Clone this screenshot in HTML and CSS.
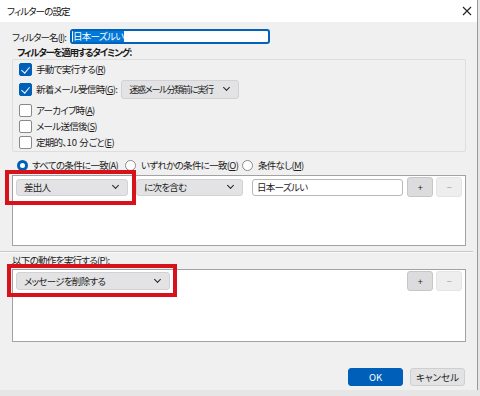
FILE: index.html
```html
<!DOCTYPE html>
<html lang="ja">
<head>
    <meta charset="UTF-8">
    <title>フィルターの設定</title>
    <link rel="stylesheet" href="styles.css">
</head>
<body>
    <div class="window">
        <!-- Title bar -->
        <div class="titlebar">
            <span class="title">フィルターの設定</span>
            <svg class="close" width="10" height="10" viewBox="0 0 10 10">
                <path d="M1 1L9 9M9 1L1 9" stroke="#222" stroke-width="1.1" fill="none"/>
            </svg>
        </div>

        <div class="dialog">
            <div class="section">
                <!-- Filter name -->
                <div class="name-row">
                    <span class="label">フィルター名(<u>I</u>):</span>
                    <div class="name-input"><span class="selected">日本ーズルい</span></div>
                </div>

                <!-- Timing -->
                <div class="group-title">フィルターを適用するタイミング:</div>
                <div class="group">
                    <div class="check-row">
                        <span class="check on"></span>
                        <span>手動で実行する(<u>R</u>)</span>
                    </div>
                    <div class="check-row tall">
                        <span class="check on"></span>
                        <span>新着メール受信時(<u>G</u>):</span>
                        <div class="select timing">迷惑メール分類前に実行<span class="chev"></span></div>
                    </div>
                    <div class="check-row">
                        <span class="check"></span>
                        <span>アーカイブ時(<u>A</u>)</span>
                    </div>
                    <div class="check-row">
                        <span class="check"></span>
                        <span>メール送信後(<u>S</u>)</span>
                    </div>
                    <div class="check-row">
                        <span class="check"></span>
                        <span>定期的、<span class="num">10 分</span>ごと(<u>E</u>)</span>
                    </div>
                </div>

                <!-- Match mode -->
                <div class="radio-row">
                    <div class="radio-item first">
                        <span class="radio on"></span>
                        <span>すべての条件に一致(<u>A</u>)</span>
                    </div>
                    <div class="radio-item second">
                        <span class="radio"></span>
                        <span>いずれかの条件に一致(<u>O</u>)</span>
                    </div>
                    <div class="radio-item">
                        <span class="radio"></span>
                        <span>条件なし(<u>M</u>)</span>
                    </div>
                </div>

                <!-- Conditions -->
                <div class="list conditions">
                    <div class="rule-row">
                        <div class="select marked field">差出人<span class="chev"></span></div>
                        <div class="select op">に次を含む<span class="chev"></span></div>
                        <div class="text-field">日本ーズルい</div>
                        <div class="pm">+</div>
                        <div class="pm off">−</div>
                    </div>
                </div>
            </div>

            <div class="sep"></div>

            <div class="section">
                <div class="action-title">以下の動作を実行する(<u>P</u>):</div>
                <div class="list actions">
                    <div class="rule-row">
                        <div class="select marked action">メッセージを削除する<span class="chev"></span></div>
                        <div class="fill"></div>
                        <div class="pm">+</div>
                        <div class="pm off">−</div>
                    </div>
                </div>

                <!-- Buttons -->
                <div class="footer">
                    <div class="btn primary">OK</div>
                    <div class="btn">キャンセル</div>
                </div>
            </div>
        </div>
    </div>
</body>
</html>
```

FILE: styles.css
```css
/* Reset and basic styles */
* {
    margin: 0;
    padding: 0;
    box-sizing: border-box;
}

body, html {
    width: 480px;
    height: 396px;
    overflow: hidden;
    background-color: #e6e6e6;
    font-family: "Noto Sans CJK JP", "Noto Sans", sans-serif;
    font-size: 9.5px;
    letter-spacing: -0.7px;
    font-feature-settings: "palt";
    white-space: nowrap;
    color: #1b1b1b;
}

u {
    text-decoration: underline;
    text-underline-offset: 1px;
}

/* Window */
.window {
    width: 478px;
    height: 390px;
    background-color: #f0f0f0;
    border-right: 1px solid #9a9a9a;
}

.titlebar {
    height: 22px;
    background-color: #fff;
    display: flex;
    align-items: center;
    justify-content: space-between;
    padding: 0 5px 0 7px;
}

.title {
    font-size: 9.5px;
    letter-spacing: -0.9px;
    color: #111;
}

.close {
    margin-top: -1px;
}

/* Dialog body */
.section {
    padding: 0 11px 0 12px;
}

.name-row {
    display: flex;
    align-items: center;
    margin-top: 7px;
    height: 15px;
}

.name-row .label {
    width: 58px;
    flex-shrink: 0;
    letter-spacing: -0.9px;
}

.name-input {
    width: 200px;
    height: 15px;
    border: 2px solid #0062b8;
    border-radius: 3px;
    background-color: #fff;
    display: flex;
    align-items: center;
    padding-left: 1px;
}

.name-input .selected {
    background-color: #0078d7;
    color: #fff;
    line-height: 11px;
    padding-right: 1px;
}

.group-title {
    font-weight: bold;
    letter-spacing: -1.3px;
    margin: 2px 0 0 5px;
    height: 12px;
    line-height: 12px;
}

.group {
    border: 1px solid #dedede;
    border-radius: 2px;
    padding: 1px 6px;
    margin-top: 1px;
}

.check-row {
    display: flex;
    align-items: center;
    height: 16px;
}

.check-row.tall {
    height: 20px;
    margin: 2px 0 3px;
}

.num {
    letter-spacing: 0;
}

.check {
    width: 13px;
    height: 13px;
    flex-shrink: 0;
    border: 1px solid #8a8a8a;
    border-radius: 2px;
    background-color: #fff;
    margin-right: 4px;
    position: relative;
}

.check.on {
    background-color: #005fb8;
    border-color: #005fb8;
}

.check.on::after {
    content: '';
    position: absolute;
    left: 3px;
    top: 1px;
    width: 4px;
    height: 7px;
    border-right: 1.5px solid #fff;
    border-bottom: 1.5px solid #fff;
    transform: rotate(40deg);
}

/* Dropdowns */
.select {
    height: 17px;
    flex-shrink: 0;
    background-color: #e3e3e5;
    border: 1px solid #d2d2d4;
    border-radius: 3px;
    display: flex;
    align-items: center;
    justify-content: space-between;
    padding: 0 9px 0 7px;
    position: relative;
}

.chev {
    width: 5px;
    height: 5px;
    flex-shrink: 0;
    border-right: 1.6px solid #222;
    border-bottom: 1.6px solid #222;
    transform: rotate(45deg);
    margin-top: -3px;
}

.select.timing {
    width: 118px;
    height: 19px;
    margin-left: 4px;
    padding: 0 9px 0 7px;
    font-size: 9px;
    letter-spacing: -1.2px;
}

.select.field {
    width: 112px;
}

.select.op {
    width: 107px;
    margin-left: 8px;
}

.select.action {
    width: 154px;
    height: 18px;
}

/* Red highlight boxes */
.select.marked::after {
    content: '';
    position: absolute;
    top: -10px;
    bottom: -10px;
    left: -12px;
    right: -9px;
    border: 4px solid #d8121b;
}

.select.action.marked::after {
    top: -9px;
    bottom: -8px;
    left: -10px;
    right: -8px;
}

/* Radios */
.radio-row {
    display: flex;
    align-items: center;
    height: 16px;
    margin-top: 5px;
    padding-left: 5px;
}

.radio-item {
    display: flex;
    align-items: center;
    flex-shrink: 0;
}

.radio-item.first {
    width: 108px;
}

.radio-item.second {
    width: 117px;
}

.radio {
    width: 11px;
    height: 11px;
    flex-shrink: 0;
    border-radius: 50%;
    border: 1px solid #8a8a8a;
    background-color: #fff;
    margin-right: 4px;
}

.radio-item.second .radio,
.radio-item:last-child .radio {
    margin-right: 5px;
}

.radio.on {
    border: 3px solid #005fb8;
}

/* Lists */
.list {
    background-color: #fff;
    border: 1px solid #a2a2a2;
    padding: 1px 3px;
}

.conditions {
    margin-top: 2px;
    height: 71px;
}

.actions {
    margin-top: 2px;
    height: 73px;
}

.rule-row {
    display: flex;
    align-items: center;
    height: 20px;
}

.text-field {
    width: 151px;
    height: 17px;
    flex-shrink: 0;
    margin-left: 9px;
    border: 1px solid #b8b8b8;
    border-radius: 3px;
    padding-left: 4px;
    display: flex;
    align-items: center;
}

.fill {
    flex: 1;
}

.pm {
    width: 26px;
    height: 20px;
    flex-shrink: 0;
    border: 1px solid #c6c6c8;
    border-radius: 3px;
    background-color: #dcdcdf;
    display: flex;
    align-items: center;
    justify-content: center;
    margin-left: 4px;
    font-size: 9px;
}

.pm.off {
    margin-left: 3px;
    background-color: #eeeeee;
    border-color: #e4e4e4;
    color: #9a9a9a;
}

/* Separator */
.sep {
    margin: 5px 4px 0 0;
    height: 2px;
    border-top: 1px solid #c8c8c8;
    border-bottom: 1px solid #fafafa;
}

.action-title {
    height: 13px;
    line-height: 13px;
    margin-top: 1px;
}

/* Footer buttons */
.footer {
    display: flex;
    justify-content: flex-end;
    gap: 7px;
    margin-top: 26px;
    padding-right: 1px;
}

.btn {
    width: 55px;
    height: 18px;
    border: 1px solid #cfcfcf;
    border-radius: 3px;
    background-color: #e3e3e3;
    display: flex;
    align-items: center;
    justify-content: center;
    letter-spacing: 0;
}

.btn.primary {
    background-color: #005fb8;
    border-color: #005fb8;
    color: #fff;
}
```
